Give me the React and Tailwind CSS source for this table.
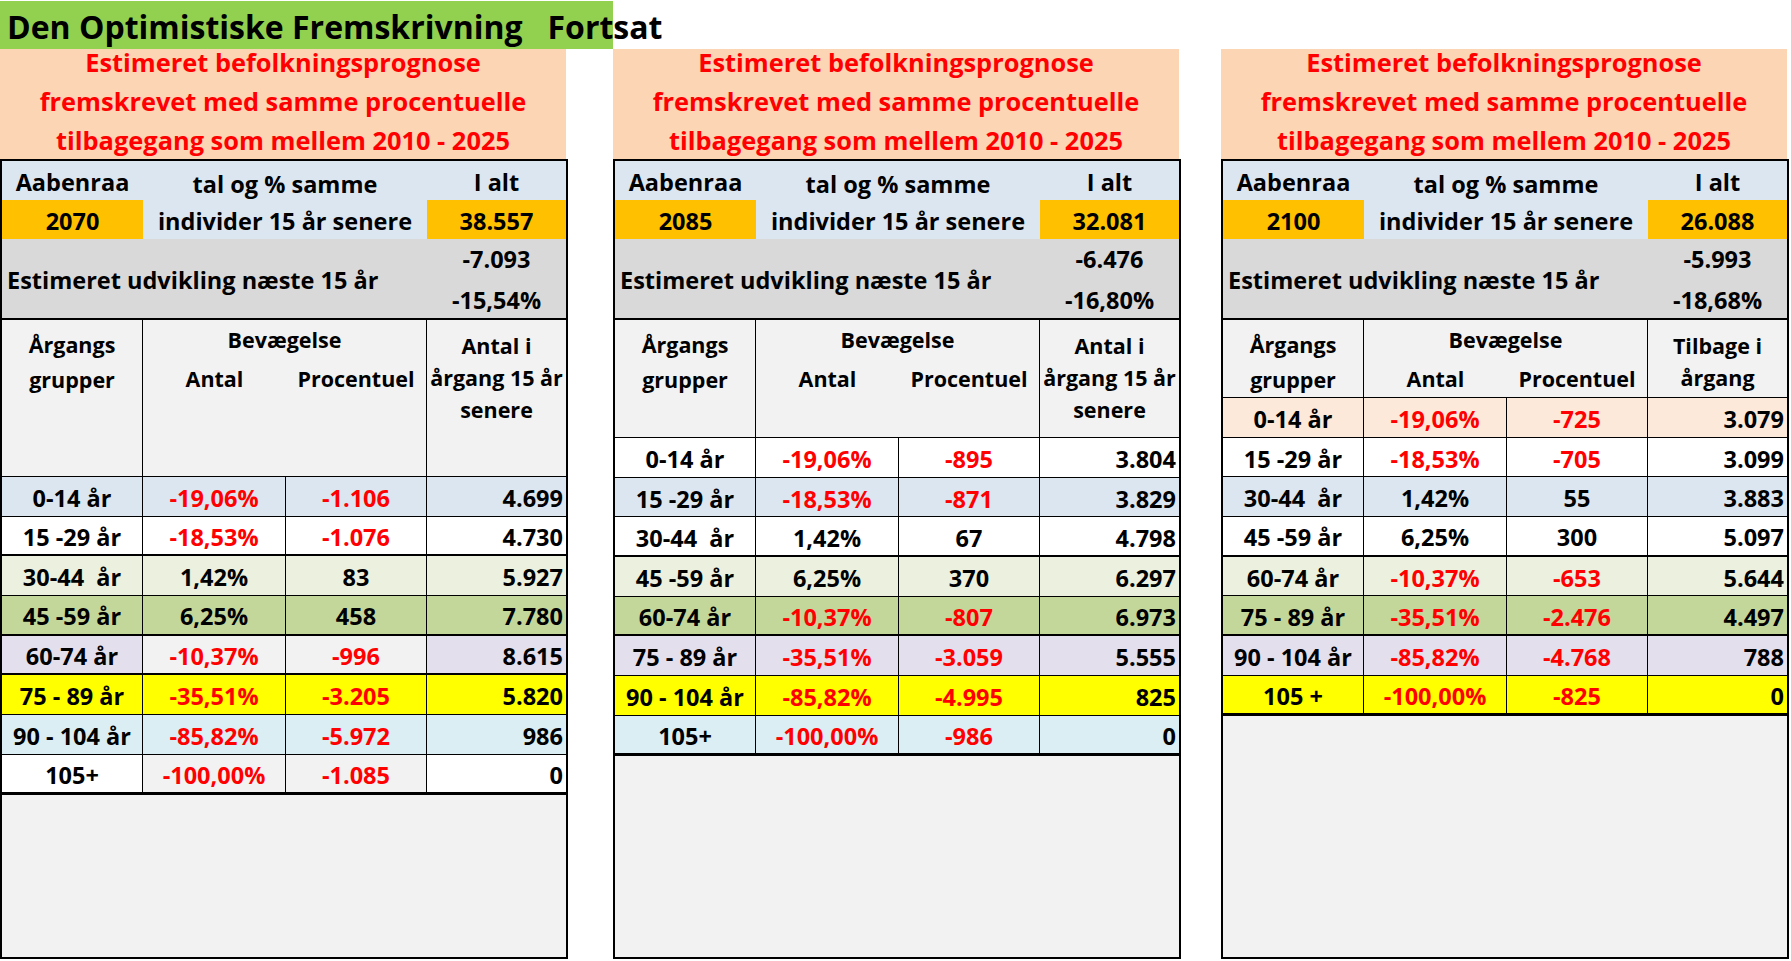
import React from 'react';

const BG = {
  blue: 'bg-[#dce6f1]',
  white: 'bg-white',
  lgreen: 'bg-[#ebf1de]',
  green: 'bg-[#c4d79b]',
  lav: 'bg-[#e4dfec]',
  yellow: 'bg-[#ffff00]',
  cyan: 'bg-[#daeef3]',
  peach: 'bg-[#fde9d9]',
  gray: 'bg-[#f2f2f2]',
};

const LINE = { 1: 'border-b', 2: 'border-b-2', 3: 'border-b-[3px]' };

// [gruppe, procent, antal, i alt, farve, farve midt (valgfri), linje under]
const panels = [
  {
    year: '2070', total: '38.557', change: '-7.093', pct: '-15,54%',
    head: ['Antal i', 'årgang 15 år', 'senere'], headH: 'h-[157px]', ml: '',
    rows: [
      ['0-14 år', '-19,06%', '-1.106', '4.699', 'blue', null, 1],
      ['15 -29 år', '-18,53%', '-1.076', '4.730', 'white', null, 2],
      ['30-44  år', '1,42%', '83', '5.927', 'lgreen', null, 1],
      ['45 -59 år', '6,25%', '458', '7.780', 'green', null, 2],
      ['60-74 år', '-10,37%', '-996', '8.615', 'lav', 'gray', 2],
      ['75 - 89 år', '-35,51%', '-3.205', '5.820', 'yellow', null, 1],
      ['90 - 104 år', '-85,82%', '-5.972', '986', 'cyan', null, 1],
      ['105+', '-100,00%', '-1.085', '0', 'white', 'gray', 3],
    ],
  },
  {
    year: '2085', total: '32.081', change: '-6.476', pct: '-16,80%',
    head: ['Antal i', 'årgang 15 år', 'senere'], headH: 'h-[118px]', ml: 'ml-[45px]',
    rows: [
      ['0-14 år', '-19,06%', '-895', '3.804', 'white', null, 1],
      ['15 -29 år', '-18,53%', '-871', '3.829', 'blue', null, 1],
      ['30-44  år', '1,42%', '67', '4.798', 'white', null, 2],
      ['45 -59 år', '6,25%', '370', '6.297', 'lgreen', null, 1],
      ['60-74 år', '-10,37%', '-807', '6.973', 'green', null, 2],
      ['75 - 89 år', '-35,51%', '-3.059', '5.555', 'lav', null, 1],
      ['90 - 104 år', '-85,82%', '-4.995', '825', 'yellow', null, 1],
      ['105+', '-100,00%', '-986', '0', 'cyan', null, 3],
    ],
  },
  {
    year: '2100', total: '26.088', change: '-5.993', pct: '-18,68%',
    head: ['Tilbage i', 'årgang'], headH: 'h-[78px]', ml: 'ml-[40px]',
    rows: [
      ['0-14 år', '-19,06%', '-725', '3.079', 'peach', null, 1],
      ['15 -29 år', '-18,53%', '-705', '3.099', 'white', null, 1],
      ['30-44  år', '1,42%', '55', '3.883', 'blue', null, 1],
      ['45 -59 år', '6,25%', '300', '5.097', 'white', null, 2],
      ['60-74 år', '-10,37%', '-653', '5.644', 'lgreen', null, 1],
      ['75 - 89 år', '-35,51%', '-2.476', '4.497', 'green', null, 2],
      ['90 - 104 år', '-85,82%', '-4.768', '788', 'lav', null, 1],
      ['105 +', '-100,00%', '-825', '0', 'yellow', null, 3],
    ],
  },
];

function DataRow({ row }) {
  const [label, pct, antal, total, bg, mid, line] = row;
  const midBg = BG[mid || bg];
  const red = (v) => (v.startsWith('-') ? 'text-[#ff0000]' : 'text-black');
  const cell = 'flex items-center justify-center pt-[3px] border-r border-black whitespace-pre';
  return (
    <div className={`grid grid-cols-[141px_143px_141px_1fr] h-[39.7px] shrink-0 border-black ${LINE[line]}`}>
      <div className={`${cell} ${BG[bg]}`}>{label}</div>
      <div className={`${cell} ${midBg} ${red(pct)}`}>{pct}</div>
      <div className={`${cell} ${midBg} ${red(antal)}`}>{antal}</div>
      <div className={`flex items-center justify-end pt-[3px] pr-[3px] ${BG[bg]}`}>{total}</div>
    </div>
  );
}

function Panel({ p }) {
  return (
    <div className={`w-[568px] flex flex-col shrink-0 ${p.ml}`}>
      <div className="h-[110px] w-[566px] bg-[#fcd5b4] text-[#ff0000] text-[25.4px] leading-[39px] text-center flex flex-col justify-center pb-[6px] whitespace-nowrap">
        <div>Estimeret befolkningsprognose</div>
        <div>fremskrevet med samme procentuelle</div>
        <div>tilbagegang som mellem 2010 - 2025</div>
      </div>
      <div className="h-[800px] border-2 border-black bg-[#f2f2f2] flex flex-col text-[23.5px] leading-[28px] whitespace-nowrap">
        <div className="h-[39px] grid grid-cols-[141px_284px_1fr] bg-[#dce6f1] shrink-0">
          <div className="flex items-center justify-center pt-[2px]">Aabenraa</div>
          <div className="flex items-center justify-center pt-[6px]">tal og % samme</div>
          <div className="flex items-center justify-center pt-[2px]">I alt</div>
        </div>
        <div className="h-[39px] grid grid-cols-[141px_284px_1fr] shrink-0">
          <div className="flex items-center justify-center pt-[3px] bg-[#ffc000]">{p.year}</div>
          <div className="flex items-center justify-center pt-[3px] bg-[#dce6f1]">individer 15 år senere</div>
          <div className="flex items-center justify-center pt-[3px] bg-[#ffc000]">{p.total}</div>
        </div>
        <div className="h-[81px] flex bg-[#d9d9d9] border-b-2 border-black shrink-0">
          <div className="flex-1 flex items-center pl-[5px] pt-[2px]">Estimeret udvikling næste 15 år</div>
          <div className="w-[139px] flex flex-col justify-center items-center leading-[41px] pt-[2px]">
            <div>{p.change}</div>
            <div>{p.pct}</div>
          </div>
        </div>
        <div className={`${p.headH} grid grid-cols-[141px_284px_1fr] border-b border-black text-[21.5px] leading-[32px] shrink-0`}>
          <div className="border-r border-black text-center pt-[7px] leading-[35px]">
            <div>Årgangs</div>
            <div>grupper</div>
          </div>
          <div className="border-r border-black pt-[4px]">
            <div className="text-center">Bevægelse</div>
            <div className="grid grid-cols-[143px_1fr] mt-[7px]">
              <div className="text-center">Antal</div>
              <div className="text-center">Procentuel</div>
            </div>
          </div>
          <div className="text-center pt-[10px]">
            {p.head.map((t) => (
              <div key={t}>{t}</div>
            ))}
          </div>
        </div>
        {p.rows.map((r) => (
          <DataRow key={r[0]} row={r} />
        ))}
        <div className="flex-1" />
      </div>
    </div>
  );
}

export default function App() {
  return (
    <div className="w-[1791px] h-[961px] bg-white overflow-hidden font-['Open_Sans','Noto_Sans',sans-serif] font-bold text-black">
      <div className="h-[48px] w-[613px] mt-[1px] bg-[#92d050] pl-[7px] pt-[3px] text-[32px] leading-[45px] whitespace-pre">
        Den Optimistiske Fremskrivning   Fortsat
      </div>
      <div className="flex">
        {panels.map((p) => (
          <Panel key={p.year} p={p} />
        ))}
      </div>
    </div>
  );
}
